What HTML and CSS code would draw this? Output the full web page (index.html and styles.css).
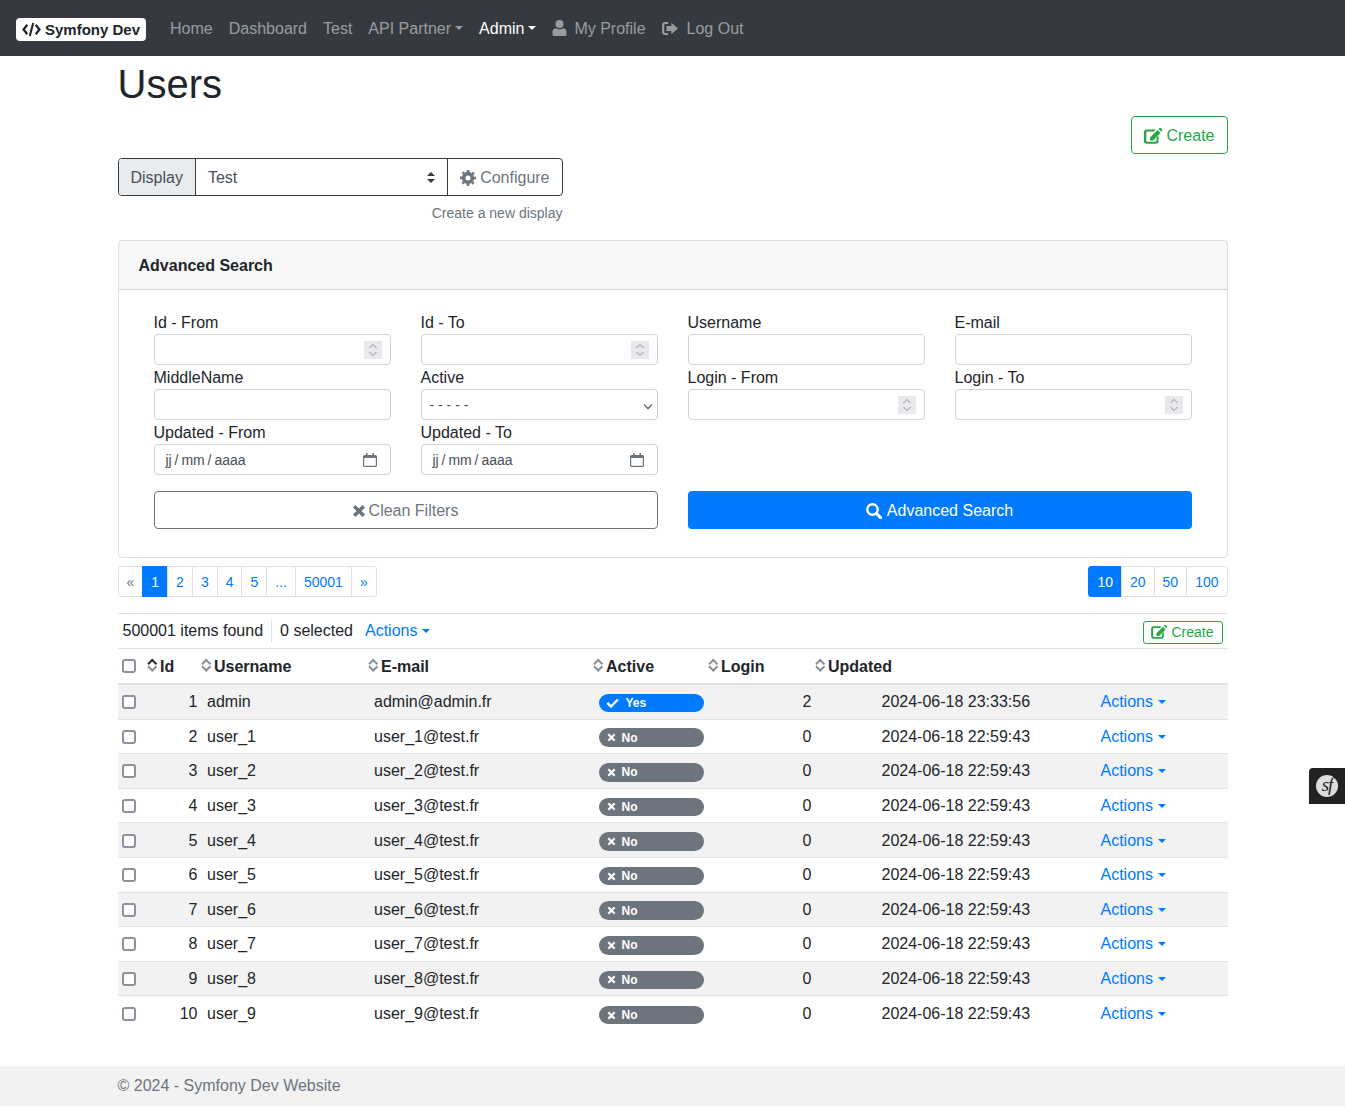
FILE: index.html
```html
<!DOCTYPE html>
<html lang="fr">
<head>
    <meta charset="UTF-8">
    <meta name="viewport" content="width=device-width, initial-scale=1.0">
    <title>Users</title>
    <link rel="stylesheet" href="styles.css">
</head>
<body>
    <nav class="navbar">
        <a class="brand" href="#"><svg class="brand-icon" viewBox="0 0 20 16"><path d="M5.500 3 1.500 8l4 5M14.500 3l4 5-4 5" fill="none" stroke="#212529" stroke-width="2.400"/><path d="M11.800 1 8.200 15" fill="none" stroke="#212529" stroke-width="2.200"/></svg>Symfony Dev</a>
        <a class="nav-link" href="#">Home</a>
        <a class="nav-link" href="#">Dashboard</a>
        <a class="nav-link" href="#">Test</a>
        <a class="nav-link caret" href="#">API Partner</a>
        <a class="nav-link caret active" href="#">Admin</a>
        <a class="nav-link" href="#"><svg class="nav-icon" viewBox="0 0 14 16"><ellipse cx="7" cy="4" rx="4" ry="4"/><path d="M0 14.500V12c0-2.500 1.500-3.800 3.300-3.800.9.700 2.200 1.100 3.700 1.100s2.800-.4 3.700-1.100C12.500 8.200 14 9.500 14 12v2.500A1.500 1.500 0 0 1 12.500 16h-11A1.500 1.500 0 0 1 0 14.500z"/></svg>My Profile</a>
        <a class="nav-link" href="#"><svg class="nav-icon wide" viewBox="0 0 17 14"><path d="M6.500 0H3.200A3.200 3.200 0 0 0 0 3.200v7.600A3.200 3.200 0 0 0 3.200 14h3.300v-2.200H3.300a1 1 0 0 1-1-1V3.200a1 1 0 0 1 1-1h3.200z"/><path d="M10 .8 17 7l-7 6.200V9.700H4.700V4.300H10z"/></svg>Log Out</a>
    </nav>

    <main class="container">
        <h1 class="title">Users</h1>
        <div class="create-row">
            <a class="btn-create" href="#"><svg class="edit-icon" viewBox="0 0 18 16"><path d="M3 1.500h9L10 3.500H3.200a.9.9 0 0 0-.9.9v8.400a.9.9 0 0 0 .9.9h8.400a.9.9 0 0 0 .9-.9V9.500l2-2V13a2.700 2.700 0 0 1-2.700 2.700H2.700A2.700 2.700 0 0 1 0 13V4.200A2.700 2.700 0 0 1 2.700 1.500z"/><path d="M13.500 2 16.500 5 9 12.500H6V9.500z"/><path d="M14.500 1 15.500 0a1 1 0 0 1 1.300 0l1 1a1 1 0 0 1 0 1.300L17.500 4z"/></svg>Create</a>
        </div>

        <div class="display-group">
            <span class="display-label">Display</span>
            <div class="display-select">Test<span class="updown"></span></div>
            <a class="display-config" href="#"><svg class="gear-icon" viewBox="0 0 24 24"><circle cx="12" cy="12" r="6.500" fill="none" stroke="currentColor" stroke-width="5.500"/><circle cx="12" cy="12" r="10.500" fill="none" stroke="currentColor" stroke-width="3" stroke-dasharray="4.120 4.130" stroke-dashoffset="2.060"/></svg>Configure</a>
        </div>
        <div class="display-help"><a href="#">Create a new display</a></div>

        <section class="card">
            <div class="card-header">Advanced Search</div>
            <form class="card-body">
                <div class="filter-grid">
                    <div class="field"><label>Id - From</label><div class="input"><svg class="spin" viewBox="0 0 18 18"><path d="M5.500 7 9 3.500 12.500 7M5.500 11 9 14.500 12.500 11"/></svg></div></div>
                    <div class="field"><label>Id - To</label><div class="input"><svg class="spin" viewBox="0 0 18 18"><path d="M5.500 7 9 3.500 12.500 7M5.500 11 9 14.500 12.500 11"/></svg></div></div>
                    <div class="field"><label>Username</label><div class="input"></div></div>
                    <div class="field"><label>E-mail</label><div class="input"></div></div>
                    <div class="field"><label>MiddleName</label><div class="input"></div></div>
                    <div class="field"><label>Active</label><div class="input select">- - - - -</div></div>
                    <div class="field"><label>Login - From</label><div class="input"><svg class="spin" viewBox="0 0 18 18"><path d="M5.500 7 9 3.500 12.500 7M5.500 11 9 14.500 12.500 11"/></svg></div></div>
                    <div class="field"><label>Login - To</label><div class="input"><svg class="spin" viewBox="0 0 18 18"><path d="M5.500 7 9 3.500 12.500 7M5.500 11 9 14.500 12.500 11"/></svg></div></div>
                    <div class="field"><label>Updated - From</label><div class="input date">jj / mm / aaaa<svg class="cal-icon" viewBox="0 0 14 14"><path d="M3 0h1.500v2h5V0H11v2h1.500A1.500 1.500 0 0 1 14 3.500v9a1.500 1.500 0 0 1-1.500 1.500h-11A1.500 1.500 0 0 1 0 12.500v-9A1.500 1.500 0 0 1 1.500 2H3zM1.200 5v7.300c0 .3.200.5.500.5h10.600c.3 0 .5-.2.500-.5V5z"/></svg></div></div>
                    <div class="field"><label>Updated - To</label><div class="input date">jj / mm / aaaa<svg class="cal-icon" viewBox="0 0 14 14"><path d="M3 0h1.500v2h5V0H11v2h1.500A1.500 1.500 0 0 1 14 3.500v9a1.500 1.500 0 0 1-1.500 1.500h-11A1.500 1.500 0 0 1 0 12.500v-9A1.500 1.500 0 0 1 1.500 2H3zM1.200 5v7.300c0 .3.200.5.500.5h10.600c.3 0 .5-.2.500-.5V5z"/></svg></div></div>
                </div>
                <div class="filter-actions">
                    <a class="btn-clean" href="#"><svg class="x-icon" viewBox="0 0 12 12"><path d="M2.500 0 6 3.500 9.500 0 12 2.500 8.500 6 12 9.500 9.500 12 6 8.500 2.500 12 0 9.500 3.500 6 0 2.500z"/></svg>Clean Filters</a>
                    <a class="btn-search" href="#"><svg class="search-icon" viewBox="0 0 16 16"><circle cx="6.500" cy="6.500" r="5.200" fill="none" stroke="#fff" stroke-width="2.400"/><path d="M10.300 10.300 14.600 14.600" stroke="#fff" stroke-width="3" stroke-linecap="round"/></svg>Advanced Search</a>
                </div>
            </form>
        </section>

        <div class="pager-row">
            <ul class="pager">
                <li class="off">«</li>
                <li class="on">1</li>
                <li>2</li>
                <li>3</li>
                <li>4</li>
                <li>5</li>
                <li>...</li>
                <li>50001</li>
                <li>»</li>
            </ul>
            <ul class="pager">
                <li class="on">10</li>
                <li>20</li>
                <li>50</li>
                <li>100</li>
            </ul>
        </div>

        <div class="list-toolbar">
            <span class="found">500001 items found</span>
            <span class="selected">0 selected</span>
            <a class="link caret" href="#">Actions</a>
            <a class="btn-create small" href="#"><svg class="edit-icon" viewBox="0 0 18 16"><path d="M3 1.500h9L10 3.500H3.200a.9.9 0 0 0-.9.9v8.400a.9.9 0 0 0 .9.9h8.400a.9.9 0 0 0 .9-.9V9.500l2-2V13a2.700 2.700 0 0 1-2.700 2.700H2.700A2.700 2.700 0 0 1 0 13V4.200A2.700 2.700 0 0 1 2.700 1.500z"/><path d="M13.500 2 16.500 5 9 12.500H6V9.500z"/><path d="M14.500 1 15.500 0a1 1 0 0 1 1.300 0l1 1a1 1 0 0 1 0 1.300L17.500 4z"/></svg>Create</a>
        </div>

        <div class="list-head">
            <span class="check"></span>
            <span class="th th-id sorted">Id</span>
            <span class="th th-username">Username</span>
            <span class="th th-email">E-mail</span>
            <span class="th th-active">Active</span>
            <span class="th th-login">Login</span>
            <span class="th th-updated">Updated</span>
        </div>

        <div class="list-body">
            <div class="row"><span class="check"></span><span class="c-id">1</span><span class="c-username">admin</span><span class="c-email">admin@admin.fr</span><span class="c-active"><span class="badge yes"><svg viewBox="0 0 13 10"><path d="M1.300 4.800l3.700 3.700 6.800-7" fill="none" stroke="#fff" stroke-width="2.400"/></svg>Yes</span></span><span class="c-login">2</span><span class="c-updated">2024-06-18 23:33:56</span><a class="link caret c-actions" href="#">Actions</a></div>
            <div class="row"><span class="check"></span><span class="c-id">2</span><span class="c-username">user_1</span><span class="c-email">user_1@test.fr</span><span class="c-active"><span class="badge no"><svg viewBox="0 0 10 10"><path d="M1.500 1.500l7 7M8.500 1.500l-7 7" stroke="#fff" stroke-width="2.400"/></svg>No</span></span><span class="c-login">0</span><span class="c-updated">2024-06-18 22:59:43</span><a class="link caret c-actions" href="#">Actions</a></div>
            <div class="row"><span class="check"></span><span class="c-id">3</span><span class="c-username">user_2</span><span class="c-email">user_2@test.fr</span><span class="c-active"><span class="badge no"><svg viewBox="0 0 10 10"><path d="M1.500 1.500l7 7M8.500 1.500l-7 7" stroke="#fff" stroke-width="2.400"/></svg>No</span></span><span class="c-login">0</span><span class="c-updated">2024-06-18 22:59:43</span><a class="link caret c-actions" href="#">Actions</a></div>
            <div class="row"><span class="check"></span><span class="c-id">4</span><span class="c-username">user_3</span><span class="c-email">user_3@test.fr</span><span class="c-active"><span class="badge no"><svg viewBox="0 0 10 10"><path d="M1.500 1.500l7 7M8.500 1.500l-7 7" stroke="#fff" stroke-width="2.400"/></svg>No</span></span><span class="c-login">0</span><span class="c-updated">2024-06-18 22:59:43</span><a class="link caret c-actions" href="#">Actions</a></div>
            <div class="row"><span class="check"></span><span class="c-id">5</span><span class="c-username">user_4</span><span class="c-email">user_4@test.fr</span><span class="c-active"><span class="badge no"><svg viewBox="0 0 10 10"><path d="M1.500 1.500l7 7M8.500 1.500l-7 7" stroke="#fff" stroke-width="2.400"/></svg>No</span></span><span class="c-login">0</span><span class="c-updated">2024-06-18 22:59:43</span><a class="link caret c-actions" href="#">Actions</a></div>
            <div class="row"><span class="check"></span><span class="c-id">6</span><span class="c-username">user_5</span><span class="c-email">user_5@test.fr</span><span class="c-active"><span class="badge no"><svg viewBox="0 0 10 10"><path d="M1.500 1.500l7 7M8.500 1.500l-7 7" stroke="#fff" stroke-width="2.400"/></svg>No</span></span><span class="c-login">0</span><span class="c-updated">2024-06-18 22:59:43</span><a class="link caret c-actions" href="#">Actions</a></div>
            <div class="row"><span class="check"></span><span class="c-id">7</span><span class="c-username">user_6</span><span class="c-email">user_6@test.fr</span><span class="c-active"><span class="badge no"><svg viewBox="0 0 10 10"><path d="M1.500 1.500l7 7M8.500 1.500l-7 7" stroke="#fff" stroke-width="2.400"/></svg>No</span></span><span class="c-login">0</span><span class="c-updated">2024-06-18 22:59:43</span><a class="link caret c-actions" href="#">Actions</a></div>
            <div class="row"><span class="check"></span><span class="c-id">8</span><span class="c-username">user_7</span><span class="c-email">user_7@test.fr</span><span class="c-active"><span class="badge no"><svg viewBox="0 0 10 10"><path d="M1.500 1.500l7 7M8.500 1.500l-7 7" stroke="#fff" stroke-width="2.400"/></svg>No</span></span><span class="c-login">0</span><span class="c-updated">2024-06-18 22:59:43</span><a class="link caret c-actions" href="#">Actions</a></div>
            <div class="row"><span class="check"></span><span class="c-id">9</span><span class="c-username">user_8</span><span class="c-email">user_8@test.fr</span><span class="c-active"><span class="badge no"><svg viewBox="0 0 10 10"><path d="M1.500 1.500l7 7M8.500 1.500l-7 7" stroke="#fff" stroke-width="2.400"/></svg>No</span></span><span class="c-login">0</span><span class="c-updated">2024-06-18 22:59:43</span><a class="link caret c-actions" href="#">Actions</a></div>
            <div class="row"><span class="check"></span><span class="c-id">10</span><span class="c-username">user_9</span><span class="c-email">user_9@test.fr</span><span class="c-active"><span class="badge no"><svg viewBox="0 0 10 10"><path d="M1.500 1.500l7 7M8.500 1.500l-7 7" stroke="#fff" stroke-width="2.400"/></svg>No</span></span><span class="c-login">0</span><span class="c-updated">2024-06-18 22:59:43</span><a class="link caret c-actions" href="#">Actions</a></div>
        </div>
    </main>

    <footer class="footer"><div class="footer-text">© 2024 - Symfony Dev Website</div></footer>

    <a class="sf-toolbar" href="#"><span class="sf-logo">sf</span></a>
</body>
</html>
```

FILE: styles.css
```css
* {
    box-sizing: border-box;
}

body {
    margin: 0;
    font-family: "Liberation Sans", Arial, sans-serif;
    font-size: 16px;
    line-height: 24px;
    color: #212529;
    background-color: #fff;
}

a {
    text-decoration: none;
}

ul {
    list-style: none;
    margin: 0;
    padding: 0;
}

svg {
    fill: currentColor;
    flex: none;
}

.caret::after {
    content: "";
    display: inline-block;
    margin-left: 5px;
    vertical-align: 3px;
    border-top: 4.8px solid;
    border-left: 4.8px solid transparent;
    border-right: 4.8px solid transparent;
}

.link {
    color: #007bff;
}

/* navbar */
.navbar {
    height: 56px;
    background-color: #343a40;
    display: flex;
    align-items: center;
    padding: 0 16px;
}

.brand {
    display: flex;
    align-items: center;
    height: 23px;
    margin: 3px 16px 0 0;
    padding: 0 6px;
    background-color: #fff;
    border-radius: 4px;
    color: #212529;
    font-size: 15px;
    font-weight: bold;
}

.brand-icon {
    width: 19px;
    height: 15px;
    margin-right: 4px;
}

.nav-link {
    display: flex;
    align-items: center;
    padding: 2px 8px 0;
    color: rgba(255, 255, 255, 0.5);
}

.nav-link.caret::after {
    margin-top: -3px;
    margin-left: 4px;
    vertical-align: 0;
}

.nav-link.active {
    color: #fff;
}

.nav-icon {
    width: 15px;
    height: 16px;
    margin: -2px 7px 0 0;
}

.nav-icon.wide {
    width: 16px;
    height: 13px;
    margin-right: 9px;
}

/* page */
.container {
    width: 1110px;
    margin-left: 117.5px;
}

.title {
    margin: 4px 0 8px;
    font-size: 40px;
    font-weight: 500;
    line-height: 48px;
}

.create-row {
    display: flex;
    justify-content: flex-end;
    margin-bottom: 4px;
}

.btn-create {
    display: flex;
    align-items: center;
    height: 38px;
    padding: 1px 12px 0;
    border: 1px solid #28a745;
    border-radius: 4px;
    color: #28a745;
}

.edit-icon {
    width: 18px;
    height: 16px;
    margin-right: 4px;
}

.btn-create.small {
    height: 23px;
    margin: 2px 0 0 auto;
    padding: 0 8px 0 7.5px;
    font-size: 14px;
    border-radius: 3px;
}

.btn-create.small .edit-icon {
    width: 16px;
    height: 14px;
}

.display-group {
    display: flex;
    width: 445px;
    height: 38px;
    border: 1px solid #343a40;
    border-radius: 4px;
    overflow: hidden;
}

.display-label {
    padding: 7px 12px 5px;
    background-color: #e9ecef;
    color: #495057;
    border-right: 1px solid #343a40;
}

.display-select {
    flex: 1;
    position: relative;
    padding: 7px 12px 5px;
    color: #495057;
    border-right: 1px solid #343a40;
}

.updown {
    position: absolute;
    right: 12px;
    top: 13px;
    border-left: 4px solid transparent;
    border-right: 4px solid transparent;
    border-bottom: 4.500px solid #343a40;
}

.updown::after {
    content: "";
    position: absolute;
    left: -4px;
    top: 6.500px;
    border-left: 4px solid transparent;
    border-right: 4px solid transparent;
    border-top: 4.500px solid #343a40;
}

.display-config {
    display: flex;
    align-items: center;
    padding: 1px 12px 0;
    color: #6c757d;
}

.gear-icon {
    width: 16px;
    height: 16px;
    margin-right: 4px;
}

.display-help {
    width: 445px;
    margin-top: 7px;
    text-align: right;
    font-size: 14px;
    line-height: 21px;
}

.display-help a {
    color: #6c757d;
}

/* advanced search */
.card {
    margin-top: 16px;
    border: 1px solid rgba(0, 0, 0, 0.125);
    border-radius: 4px;
}

.card-header {
    height: 49px;
    padding: 13px 20px 0;
    background-color: rgba(0, 0, 0, 0.03);
    border-bottom: 1px solid rgba(0, 0, 0, 0.125);
    font-weight: bold;
}

.card-body {
    padding: 20px 35px 28px;
}

.filter-grid {
    display: grid;
    grid-template-columns: repeat(4, 237px);
    column-gap: 30px;
}

.field label {
    display: block;
    padding-top: 1px;
    line-height: 23px;
}

.input {
    height: 31px;
    position: relative;
    border: 1px solid #ced4da;
    border-radius: 4px;
    background-color: #fff;
}

.spin {
    position: absolute;
    top: 6px;
    right: 8px;
    width: 18px;
    height: 18px;
    background-color: #e9e9ed;
    fill: none;
    stroke: #8f8f9d;
    stroke-width: 1;
}

.input.select {
    padding: 1px 0 0 8px;
    font-size: 14px;
    line-height: 29px;
    color: #495057;
}

.input.select::after {
    content: "";
    position: absolute;
    top: 12px;
    right: 6px;
    width: 5px;
    height: 5px;
    border-right: 1px solid #343a40;
    border-bottom: 1px solid #343a40;
    transform: rotate(45deg);
}

.input.date {
    display: flex;
    align-items: center;
    justify-content: space-between;
    padding: 0 13px 0 11px;
    font-size: 14px;
    word-spacing: -1px;
    color: #495057;
}

.cal-icon {
    width: 14px;
    height: 14px;
    color: #6c757d;
}

.filter-actions {
    display: grid;
    grid-template-columns: 504px 504px;
    column-gap: 30px;
    margin-top: 16px;
}

.btn-clean,
.btn-search {
    display: flex;
    align-items: center;
    justify-content: center;
    height: 38px;
    padding-top: 1px;
    border-radius: 4px;
}

.btn-clean {
    border: 1px solid #6c757d;
    color: #6c757d;
}

.btn-search {
    background-color: #007bff;
    color: #fff;
}

.x-icon {
    width: 12px;
    height: 12px;
    margin-right: 4px;
}

.search-icon {
    width: 16px;
    height: 16px;
    margin-right: 5px;
}

/* pagination */
.pager-row {
    display: flex;
    justify-content: space-between;
    margin-top: 8px;
}

.pager {
    display: flex;
    height: 31px;
    font-size: 14px;
    line-height: 28px;
}

.pager li {
    margin-left: -1px;
    padding: 1px 8px 0;
    color: #007bff;
    border: 1px solid #dee2e6;
}

.pager li:first-child {
    margin-left: 0;
    border-radius: 3px 0 0 3px;
}

.pager li:last-child {
    border-radius: 0 3px 3px 0;
}

.pager li.on {
    background-color: #007bff;
    border-color: #007bff;
    color: #fff;
}

.pager li.off {
    color: #6c757d;
}

/* list */
.list-toolbar {
    display: flex;
    align-items: center;
    height: 36px;
    margin-top: 16px;
    padding: 0 5px;
    border-top: 1px solid #dee2e6;
    border-bottom: 1px solid #dee2e6;
}

.found {
    padding-right: 8px;
    border-right: 1px solid #dee2e6;
}

.selected {
    padding: 0 12px 0 8px;
}

.check {
    display: block;
    flex: none;
    width: 14px;
    height: 14px;
    margin-left: 4px;
    border: 2px solid #8f8f9d;
    border-radius: 3px;
    background-color: #fff;
}

.list-head {
    position: relative;
    display: flex;
    align-items: center;
    height: 36px;
    border-bottom: 2px solid #dee2e6;
    font-weight: bold;
    color: #212529;
}

.th {
    position: absolute;
    top: 6px;
}

/* sort chevrons */
.th::before,
.th::after {
    content: "";
    position: absolute;
    left: -11.5px;
    width: 4.5px;
    height: 4.5px;
    border-top: 2px solid #868e96;
    border-left: 2px solid #868e96;
}

.th::before {
    top: 4.5px;
    transform: rotate(45deg);
}

.th::after {
    top: 8.5px;
    transform: rotate(225deg);
}

.th-id { left: 42.5px; }
.th-username { left: 96.5px; }
.th-email { left: 263.5px; }
.th-active { left: 488.5px; }
.th-login { left: 603.5px; }
.th-updated { left: 710.5px; }

.th.sorted::before {
    border-color: #212529;
}

.row {
    display: grid;
    grid-template-columns: 25px 55px 167px 225px 115px 107px 289px 1fr;
    align-items: center;
    height: 34.600px;
    padding-top: 0.8px;
    border-bottom: 1px solid #dee2e6;
}

.row:nth-child(odd) {
    background-color: #f2f2f2;
}

.row:last-child {
    border-bottom: 0;
}

.c-id,
.c-login {
    text-align: right;
}

.c-username,
.c-email {
    padding-left: 9.5px;
}

.c-active {
    padding-left: 9px;
}

.c-updated {
    padding-left: 70px;
    white-space: nowrap;
}

.badge {
    display: flex;
    align-items: center;
    width: 105px;
    height: 18.600px;
    margin-top: 2px;
    padding-left: 8px;
    border-radius: 10px;
    color: #fff;
    font-size: 12px;
    font-weight: bold;
}

.badge svg {
    width: 9px;
    height: 9px;
    margin-right: 6px;
}

.badge.yes {
    background-color: #007bff;
}

.badge.yes svg {
    width: 13px;
    height: 10px;
    margin: 0 7px 0 -1px;
}

.badge.no {
    background-color: #6c757d;
}

.footer {
    margin-top: 35px;
    height: 40px;
    background-color: #f2f2f2;
    color: #6c757d;
}

.footer-text {
    padding: 8px 0 0 117.5px;
}

.sf-toolbar {
    position: absolute;
    right: 0;
    top: 768px;
    width: 36px;
    height: 36px;
    display: flex;
    align-items: center;
    justify-content: center;
    background-color: #222;
    border-radius: 4px 0 0 0;
}

.sf-logo {
    width: 22px;
    height: 22px;
    border-radius: 50%;
    background-color: #ddd;
    color: #222;
    font-family: "Liberation Serif", serif;
    font-style: italic;
    font-size: 19px;
    letter-spacing: -1px;
    line-height: 20px;
    text-align: center;
}
```
